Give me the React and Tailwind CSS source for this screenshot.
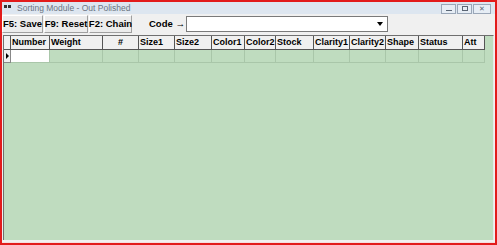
import React from "react";

const cols = [
  ["Number", 39],
  ["Weight", 53],
  ["#", 36],
  ["Size1", 36],
  ["Size2", 37],
  ["Color1", 33],
  ["Color2", 31],
  ["Stock", 38],
  ["Clarity1", 36],
  ["Clarity2", 36],
  ["Shape", 33],
  ["Status", 44],
  ["Att", 22],
];

const buttons = [
  ["F5: Save", 41],
  ["F9: Reset", 44],
  ["F2: Chain", 43],
];

export default function App() {
  return (
    <div
      className="w-[497px] h-[245px] bg-[#e21b1b] p-[2px] flex flex-col overflow-hidden"
      style={{ fontFamily: '"Liberation Sans", Arial, sans-serif' }}
    >
      <div className="flex-1 flex flex-col bg-[#f0f0f0] border-b border-[#f4dede]">
        {/* title bar */}
        <div className="h-[12px] bg-[#dde6f0] flex items-center pl-[2px] pr-[4px]">
          <div className="w-[8px] h-[7px] flex gap-[1px] items-start">
            <div className="w-[3px] h-[3px] bg-[#333]" />
            <div className="w-[3px] h-[3px] bg-[#333]" />
          </div>
          <span className="ml-[5px] text-[8.5px] leading-none text-[#6b7480]">
            Sorting Module - Out Polished
          </span>
          <div className="ml-auto flex gap-[1px] mt-[1px]">
            <div className="w-[15px] h-[10px] border border-[#9aa7b8] bg-[#e6edf5] flex items-end justify-center pb-[2px]">
              <div className="w-[6px] h-[1px] bg-[#5b6675]" />
            </div>
            <div className="w-[15px] h-[10px] border border-[#9aa7b8] bg-[#e6edf5] flex items-center justify-center">
              <div className="w-[6px] h-[5px] border border-[#5b6675]" />
            </div>
            <div className="w-[18px] h-[10px] border border-[#9aa7b8] bg-[#e6edf5] flex items-center justify-center text-[7px] leading-none text-[#5b6675]">
              ✕
            </div>
          </div>
        </div>
        {/* toolbar */}
        <div className="h-[20px] flex items-center pl-[0px] bg-[#f0f0f0]">
          {buttons.map(([t, w]) => (
            <div
              key={t}
              style={{ width: w }}
              className="h-[18px] flex items-center justify-center bg-[#ececec] border border-t-white border-l-white border-r-[#a0a0a0] border-b-[#a0a0a0] text-[9.5px] font-bold text-black leading-none mr-[1px] whitespace-nowrap"
            >
              {t}
            </div>
          ))}
          <span className="ml-[16px] w-[36px] text-[9.5px] font-bold text-black leading-none whitespace-nowrap">
            Code →
          </span>
          <div className="ml-[1px] w-[202px] h-[16px] bg-white border border-[#7a7a7a] flex justify-end">
            <div className="w-[14px] h-full flex items-center justify-center">
              <div className="w-0 h-0 border-l-[3px] border-r-[3px] border-t-[4px] border-l-transparent border-r-transparent border-t-black" />
            </div>
          </div>
        </div>
        {/* grid */}
        <div className="flex-1 mx-[1px] mt-[1px] mb-[2px] bg-[#bfdcbf] border-t border-l border-[#6f6f6f] border-r border-r-[#e8e8e8] flex flex-col">
          <div className="flex h-[14px]">
            <div className="w-[7px] h-full bg-[#f0f0f0] border-r border-b border-[#555]" />
            {cols.map(([n, w]) => (
              <div
                key={n}
                style={{ width: w }}
                className={`h-full bg-[#f0f0f0] border-r border-b border-[#555] text-[9px] font-bold leading-[13px] text-black whitespace-nowrap overflow-hidden ${
                  n === "#" ? "text-center" : "pl-[1px]"
                }`}
              >
                {n}
              </div>
            ))}
          </div>
          <div className="flex h-[13px]">
            <div className="w-[7px] h-full bg-[#f0f0f0] border-r border-b border-[#888] flex items-center justify-center">
              <div className="w-0 h-0 border-t-[3px] border-b-[3px] border-l-[3px] border-t-transparent border-b-transparent border-l-black" />
            </div>
            {cols.map(([n, w], i) => (
              <div
                key={n}
                style={{ width: w }}
                className={`h-full border-r border-b border-[#a9c6a9] ${
                  i === 0 ? "bg-white" : ""
                }`}
              />
            ))}
          </div>
        </div>
      </div>
    </div>
  );
}
